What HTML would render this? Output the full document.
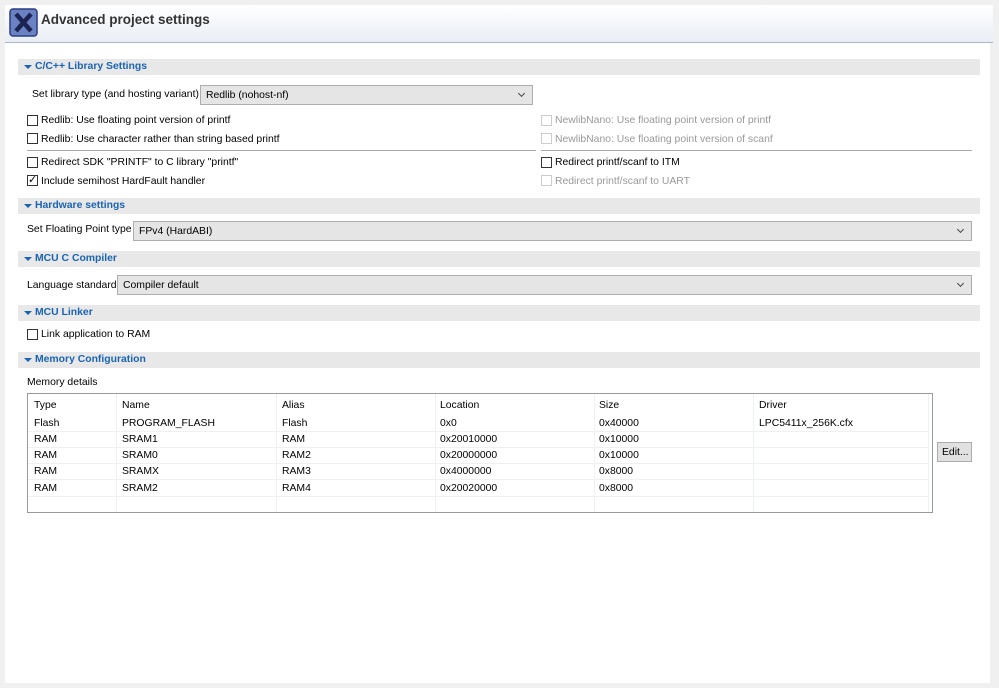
<!DOCTYPE html>
<html><head><style>
*{margin:0;padding:0;box-sizing:border-box}
body{width:999px;height:688px;background:#f0f0f0;position:relative;overflow:hidden;font-family:"Liberation Sans",sans-serif;font-size:10.4px;color:#000}
.a{position:absolute;white-space:nowrap}
.main{position:absolute;left:5px;top:5px;width:985px;height:678px;background:#fff}
.hdr{position:absolute;left:5px;top:5px;width:988px;height:38px;background:linear-gradient(#fff,#e9eef5);border-bottom:1px solid #a9b8cc}
.bar{position:absolute;left:18px;width:962px;height:16px;background:#e8e8e8}
.bar span{position:absolute;left:17px;top:2px;color:#1a64b4;font-weight:bold;font-size:10.4px}
.bar i{position:absolute;left:6px;top:6px;border-left:4px solid transparent;border-right:4px solid transparent;border-top:4px solid #1a64b4}
.cb{position:absolute;width:11px;height:11px;border:1px solid #333;background:#fff}
.cb.d{border-color:#ccc}
.dis{color:#999}
.sel{position:absolute;height:20px;background:#e5e5e5;border:1px solid #adadad;padding:4px 0 0 5px}
.sel:after{content:"";position:absolute;right:8px;top:5px;width:4px;height:4px;border-right:1px solid #444;border-bottom:1px solid #444;transform:rotate(45deg)}
.tbl{position:absolute;left:27px;top:393px;width:906px;height:120px;border:1px solid #9a9a9a;background:#fff}
.tbl .a{margin-top:1px}
.vl{position:absolute;top:0;width:1px;height:118px;background:#eef0f2}
.hl{position:absolute;left:0;width:900px;height:1px;background:#eef0f2}
</style></head><body>
<div class="main"></div>
<div class="hdr"></div>
<svg class="a" style="left:9px;top:8px" width="29" height="29" viewBox="0 0 29 29"><rect x="1" y="1" width="27" height="27" rx="3" fill="#6a82c4" stroke="#2b3e80" stroke-width="1.5"/><path d="M7 6 L22 23 M22 6 L7 23" stroke="#1b2450" stroke-width="4.5"/></svg>
<div class="a" style="left:41px;top:12px;font-size:13.5px;font-weight:bold;color:#333">Advanced project settings</div>

<div class="bar" style="top:59px"><i></i><span>C/C++ Library Settings</span></div>
<div class="a" style="left:32px;top:89px">Set library type (and hosting variant)</div>
<div class="sel" style="left:200px;top:85px;width:333px">Redlib (nohost-nf)</div>
<div class="cb" style="left:27px;top:115px"></div><div class="a" style="left:41px;top:115px">Redlib: Use floating point version of printf</div>
<div class="cb" style="left:27px;top:133px"></div><div class="a" style="left:41px;top:134px">Redlib: Use character rather than string based printf</div>
<div class="cb d" style="left:541px;top:115px"></div><div class="a dis" style="left:555px;top:115px">NewlibNano: Use floating point version of printf</div>
<div class="cb d" style="left:541px;top:133px"></div><div class="a dis" style="left:555px;top:134px">NewlibNano: Use floating point version of scanf</div>
<div class="a" style="left:27px;top:150px;width:509px;height:1px;background:#aaa"></div>
<div class="a" style="left:541px;top:150px;width:431px;height:1px;background:#aaa"></div>
<div class="cb" style="left:27px;top:157px"></div><div class="a" style="left:41px;top:157px">Redirect SDK "PRINTF" to C library "printf"</div>
<div class="cb" style="left:27px;top:175px"></div><div class="a" style="left:28px;top:173px;font-size:11px">✓</div><div class="a" style="left:41px;top:176px">Include semihost HardFault handler</div>
<div class="cb" style="left:541px;top:157px"></div><div class="a" style="left:555px;top:157px">Redirect printf/scanf to ITM</div>
<div class="cb d" style="left:541px;top:175px"></div><div class="a dis" style="left:555px;top:176px">Redirect printf/scanf to UART</div>

<div class="bar" style="top:198px"><i></i><span>Hardware settings</span></div>
<div class="a" style="left:27px;top:224px">Set Floating Point type</div>
<div class="sel" style="left:133px;top:221px;width:839px">FPv4 (HardABI)</div>

<div class="bar" style="top:251px"><i></i><span>MCU C Compiler</span></div>
<div class="a" style="left:27px;top:280px">Language standard</div>
<div class="sel" style="left:117px;top:275px;width:855px">Compiler default</div>

<div class="bar" style="top:305px"><i></i><span>MCU Linker</span></div>
<div class="cb" style="left:27px;top:329px"></div><div class="a" style="left:41px;top:329px">Link application to RAM</div>

<div class="bar" style="top:352px"><i></i><span>Memory Configuration</span></div>
<div class="a" style="left:27px;top:377px">Memory details</div>
<div class="tbl">
<div class="vl" style="left:88px"></div><div class="vl" style="left:248px"></div><div class="vl" style="left:407px"></div><div class="vl" style="left:566px"></div><div class="vl" style="left:725px"></div><div class="vl" style="left:900px"></div>
<div class="hl" style="top:37px"></div><div class="hl" style="top:53px"></div><div class="hl" style="top:69px"></div><div class="hl" style="top:85px"></div><div class="hl" style="top:102px"></div>
<div class="a" style="left:6px;top:5px">Type</div><div class="a" style="left:94px;top:5px">Name</div><div class="a" style="left:254px;top:5px">Alias</div><div class="a" style="left:412px;top:5px">Location</div><div class="a" style="left:571px;top:5px">Size</div><div class="a" style="left:731px;top:5px">Driver</div>
<div class="a" style="left:6px;top:23px">Flash</div><div class="a" style="left:94px;top:23px">PROGRAM_FLASH</div><div class="a" style="left:254px;top:23px">Flash</div><div class="a" style="left:412px;top:23px">0x0</div><div class="a" style="left:571px;top:23px">0x40000</div><div class="a" style="left:731px;top:23px">LPC5411x_256K.cfx</div>
<div class="a" style="left:6px;top:39px">RAM</div><div class="a" style="left:94px;top:39px">SRAM1</div><div class="a" style="left:254px;top:39px">RAM</div><div class="a" style="left:412px;top:39px">0x20010000</div><div class="a" style="left:571px;top:39px">0x10000</div>
<div class="a" style="left:6px;top:55px">RAM</div><div class="a" style="left:94px;top:55px">SRAM0</div><div class="a" style="left:254px;top:55px">RAM2</div><div class="a" style="left:412px;top:55px">0x20000000</div><div class="a" style="left:571px;top:55px">0x10000</div>
<div class="a" style="left:6px;top:71px">RAM</div><div class="a" style="left:94px;top:71px">SRAMX</div><div class="a" style="left:254px;top:71px">RAM3</div><div class="a" style="left:412px;top:71px">0x4000000</div><div class="a" style="left:571px;top:71px">0x8000</div>
<div class="a" style="left:6px;top:88px">RAM</div><div class="a" style="left:94px;top:88px">SRAM2</div><div class="a" style="left:254px;top:88px">RAM4</div><div class="a" style="left:412px;top:88px">0x20020000</div><div class="a" style="left:571px;top:88px">0x8000</div>
</div>
<div class="a" style="left:937px;top:442px;width:35px;height:20px;background:#e1e1e1;border:1px solid #adadad;padding:4px 0 0 4px">Edit...</div>
</body></html>
